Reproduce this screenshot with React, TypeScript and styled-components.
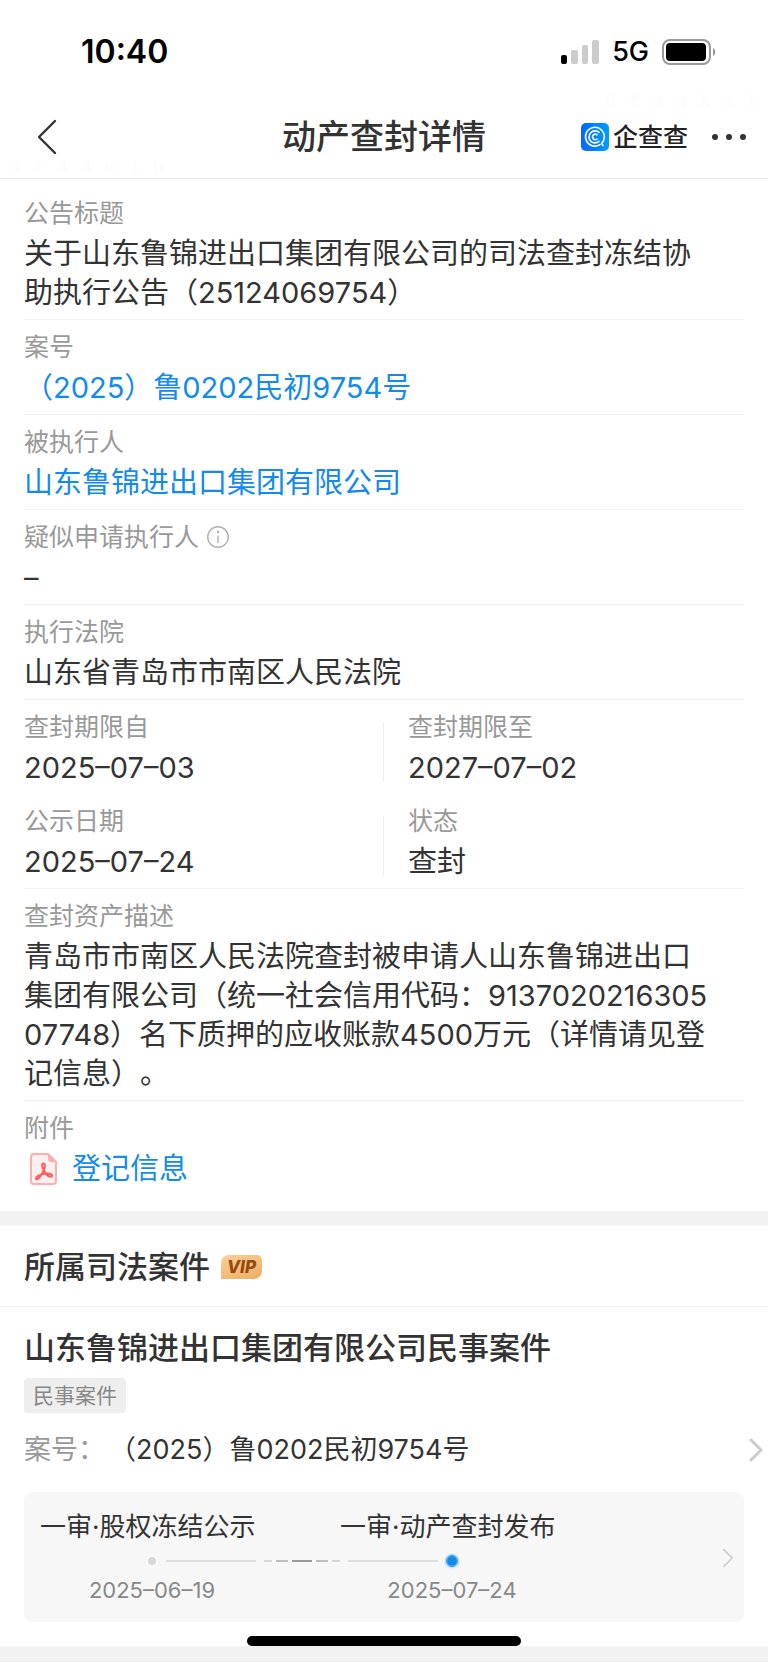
import React from "react";
import styled, { createGlobalStyle, css } from "styled-components";

const GlobalStyle = createGlobalStyle`
  *, *::before, *::after { box-sizing: border-box; }
  body {
    margin: 0;
    background: #fff;
    color: #333;
    font-family: Inter, "Noto Sans CJK SC", sans-serif;
    font-size: 29px;
    text-spacing-trim: space-all;
  }
  h1, h2, h3, p, dl, dt, dd, ol { margin: 0; padding: 0; font-weight: 400; }
  button { border: 0; padding: 0; background: none; color: inherit; font: inherit; cursor: pointer; }
  a { color: inherit; text-decoration: none; }
  svg { display: block; flex: none; }
`;

const Page = styled.div`
  position: relative;
  background: #fff;
`;

const StatusBar = styled.header`
  display: flex;
  align-items: center;
  justify-content: space-between;
  height: 102px;
  padding: 1px 52px 0 81px;
  color: #000;
`;

const Clock = styled.time`
  font-size: 32px;
  font-weight: 600;
  line-height: 40px;
`;

const StatusIcons = styled.div`
  display: flex;
  align-items: center;
  gap: 13px;
  font-size: 27px;
  font-weight: 500;
  line-height: 32px;
`;

const NavBar = styled.nav`
  display: grid;
  grid-template-columns: 1fr auto 1fr;
  align-items: center;
  height: 77px;
  padding: 0 22px 7px;
  border-bottom: 1px solid #ededed;
`;

const NavTitle = styled.h1`
  font-size: 34px;
  font-weight: 500;
  line-height: 48px;
`;

const NavSide = styled.div`
  display: flex;
  align-items: center;
  justify-content: flex-end;
  gap: 24px;
`;

const BackButton = styled.button`
  justify-self: start;
  margin-left: 14px;
`;

const Brand = styled.a`
  display: flex;
  align-items: center;
  gap: 4px;
  color: #222;
  font-size: 25px;
  font-weight: 500;
  line-height: 32px;
`;

const Watermark = styled.span<{ $corner: "left" | "right" }>`
  position: absolute;
  ${(p) => (p.$corner === "left" ? css`left: 8px; top: 157px;` : css`right: 8px; top: 91px;`)}
  color: #fcfcfc;
  font-family: "Liberation Mono", monospace;
  font-size: 20px;
  line-height: 24px;
  white-space: nowrap;
  pointer-events: none;
`;

const Details = styled.dl`
  padding: 7px 24px 16px;
  border-bottom: 15px solid #f2f2f2;
`;

const Field = styled.div<{ $last?: boolean }>`
  padding: 10px 30px 7px 0;
  border-bottom: ${(p) => (p.$last ? "0" : "1px solid #f0f0f0")};
`;

const FieldPair = styled.div<{ $last?: boolean }>`
  display: grid;
  grid-template-columns: 1fr 1fr;
  padding: 10px 0 7px;
  border-bottom: ${(p) => (p.$last ? "1px solid #f0f0f0" : "0")};
`;

const PairCell = styled.div<{ $divided?: boolean }>`
  position: relative;
  padding-left: ${(p) => (p.$divided ? "24px" : "0")};
  &::before {
    content: "";
    display: ${(p) => (p.$divided ? "block" : "none")};
    position: absolute;
    left: -1px;
    top: 12px;
    bottom: 5px;
    width: 1px;
    background: #eee;
  }
`;

const Label = styled.dt`
  display: flex;
  align-items: center;
  gap: 7px;
  margin-bottom: 4px;
  color: #999;
  font-size: 25px;
  line-height: 34px;
`;

const Value = styled.dd`
  font-size: 29px;
  line-height: 39px;
  word-break: break-all;
`;

const BlueLink = styled.a`
  color: #128bed;
`;

const FileLink = styled(BlueLink)`
  display: flex;
  align-items: center;
  gap: 15px;
  padding-left: 6px;
`;

const SectionHead = styled.div`
  display: flex;
  align-items: center;
  gap: 11px;
  padding: 17px 24px 15px;
  border-bottom: 1px solid #eee;
`;

const Heading = styled.h2`
  font-size: 31px;
  font-weight: 500;
  line-height: 48px;
`;

const VipBadge = styled.span`
  padding: 0 6px;
  border-radius: 8px 5px 8px 1px;
  background: linear-gradient(160deg, #fbcf98, #efac64);
  color: #964a0c;
  font-size: 17px;
  font-style: italic;
  font-weight: 800;
  line-height: 24px;
`;

const CaseCard = styled.section`
  padding: 17px 24px 24px;
  border-bottom: 16px solid #f2f2f2;
`;

const TagRow = styled.div`
  display: flex;
  margin-top: 6px;
`;

const Tag = styled.span`
  padding: 0 9px;
  border-radius: 4px;
  background: #eee;
  color: #888;
  font-size: 21px;
  line-height: 35px;
`;

const CaseLink = styled.a`
  display: flex;
  align-items: center;
  gap: 4px;
  margin: 17px -19px 0 0;
  font-size: 27px;
  line-height: 40px;
`;

const CaseLabel = styled.span`
  color: #999;
`;

const CaseNumber = styled.span`
  flex: 1;
`;

const Timeline = styled.a`
  display: flex;
  align-items: center;
  justify-content: space-between;
  margin-top: 22px;
  padding: 19px 10px 18px 16px;
  border-radius: 8px;
  background: #f7f7f7;
`;

const Steps = styled.div`
  display: grid;
  grid-template-columns: 300px 300px;
`;

const StepName = styled.span`
  width: 224px;
  font-size: 26px;
  line-height: 32px;
  white-space: nowrap;
`;

const StepDate = styled.time`
  width: 224px;
  color: #888;
  font-size: 22px;
  line-height: 28px;
  text-align: center;
`;

const Track = styled.div`
  grid-column: 1 / -1;
  display: flex;
  align-items: center;
  gap: 8px;
  margin: 12px 0 9px 106px;
`;

const Dot = styled.i<{ $active?: boolean }>`
  flex: none;
  width: 12px;
  height: 12px;
  border: ${(p) => (p.$active ? "1px solid #2f9aef" : "2px solid #f7f7f7")};
  border-radius: 50%;
  background: ${(p) => (p.$active ? "#128bed" : "#d6d6d6")};
  background-clip: padding-box;
  box-shadow: ${(p) => (p.$active ? "0 0 2px 1px #a9d5f8" : "none")};
`;

const Rule = styled.i`
  width: 90px;
  height: 2px;
  background: #dedede;
`;

const HomeIndicator = styled.div`
  position: absolute;
  left: 50%;
  bottom: 16px;
  width: 274px;
  height: 10px;
  margin-left: -137px;
  border-radius: 5px;
  background: #000;
`;

const SignalIcon = () => (
  <svg width="38" height="24" viewBox="0 0 38 24">
    <rect x="0" y="15" width="6" height="9" rx="2" fill="#000" />
    <rect x="10" y="10" width="7" height="14" rx="2" fill="#ccc" />
    <rect x="21" y="5" width="6" height="19" rx="2" fill="#ccc" />
    <rect x="31" y="0" width="7" height="24" rx="2" fill="#ccc" />
  </svg>
);

const BatteryIcon = () => (
  <svg width="54" height="26" viewBox="0 0 54 26">
    <rect x="1" y="1" width="47" height="24" rx="7" fill="none" stroke="#999" strokeWidth="2" />
    <rect x="4" y="4" width="40" height="18" rx="4" fill="#000" />
    <path d="M51 9c3 1.500 3 6.500 0 8z" fill="#999" />
  </svg>
);

const BackIcon = () => (
  <svg width="24" height="36" viewBox="0 0 24 36" fill="none" stroke="#333" strokeWidth="2.400" strokeLinecap="round" strokeLinejoin="round">
    <path d="M19 2 3 18l16 16" />
  </svg>
);

const BrandIcon = () => (
  <svg width="28" height="28" viewBox="0 0 28 28" fill="none" stroke="#fff" strokeLinecap="round">
    <defs>
      <linearGradient id="brand" x1="0" y1="0" x2="1" y2="0">
        <stop offset="0" stopColor="#0468ff" />
        <stop offset="1" stopColor="#009dff" />
      </linearGradient>
    </defs>
    <rect width="28" height="28" rx="5" fill="url(#brand)" stroke="none" />
    <path d="M19 21.600A9.400 9.400 0 1 1 23.300 13.800c0 2.500-1 4.800-2.600 6.500L22 22.500" strokeWidth="1.600" />
    <path d="M18 9.400A6 6 0 1 0 18 18.400" strokeWidth="1.700" />
    <path d="M16 11.800A2.700 2.700 0 1 0 16 16" strokeWidth="1.600" />
  </svg>
);

const MoreIcon = () => (
  <svg width="34" height="8" viewBox="0 0 34 8" fill="#333">
    <circle cx="3" cy="4" r="3" />
    <circle cx="17" cy="4" r="3" />
    <circle cx="31" cy="4" r="3" />
  </svg>
);

const InfoIcon = () => (
  <svg width="24" height="24" viewBox="0 0 24 24" fill="none" stroke="#b0b0b0" strokeWidth="1.400">
    <circle cx="12" cy="12" r="10.300" />
    <path d="M12 10.500V18" />
    <circle cx="12" cy="7" r="1.200" fill="#b0b0b0" stroke="none" />
  </svg>
);

const PdfIcon = () => (
  <svg width="27" height="32" viewBox="0 0 27 32">
    <path d="M4 1h14l8 8v19a3 3 0 0 1-3 3H4a3 3 0 0 1-3-3V4a3 3 0 0 1 3-3z" fill="#fff0f0" stroke="#ffadad" strokeWidth="2" />
    <path d="M18 1v5a3 3 0 0 0 3 3h5z" fill="#ffadad" />
    <path d="M13.500 10.500c-2.600 0-1 4 .2 6.500 1.600 3.600 4.500 6.600 7 6.800 2 0 1.600-2.400-.5-2.900-3.800-.8-8.700.3-12.200 2.100-2.900 1.500-2.400 3.700-.7 3.200 2.900-1 8.300-11.200 7.500-14.500-.2-.8-.7-1.200-1.300-1.200z" fill="none" stroke="#ff5c5c" strokeWidth="2" />
  </svg>
);

const Chevron = ({ width, height, weight }: { width: number; height: number; weight: number }) => (
  <svg width={width} height={height} viewBox="0 0 14 24" fill="none" stroke="#ccc" strokeWidth={weight} strokeLinecap="round" strokeLinejoin="round">
    <path d="M2 2l10 10L2 22" />
  </svg>
);

const DashIcon = () => (
  <svg width="76" height="2" viewBox="0 0 76 2">
    <rect width="8" height="2" fill="#d6d6d6" />
    <rect x="12" width="12" height="2" fill="#bdbdbd" />
    <rect x="28" width="20" height="2" fill="#999" />
    <rect x="52" width="12" height="2" fill="#bdbdbd" />
    <rect x="68" width="8" height="2" fill="#d6d6d6" />
  </svg>
);

export default function App() {
  return (
    <Page>
      <GlobalStyle />
      <StatusBar>
        <Clock>10:40</Clock>
        <StatusIcons>
          <SignalIcon />
          <span>5G</span>
          <BatteryIcon />
        </StatusIcons>
      </StatusBar>
      <NavBar>
        <BackButton aria-label="返回"><BackIcon /></BackButton>
        <NavTitle>动产查封详情</NavTitle>
        <NavSide>
          <Brand href="#"><BrandIcon />企查查</Brand>
          <button aria-label="更多"><MoreIcon /></button>
        </NavSide>
      </NavBar>
      <Watermark $corner="left" aria-hidden="true">8 f 4 4 k 1 h</Watermark>
      <Watermark $corner="right" aria-hidden="true">8 f 4 4 k 1 h</Watermark>

      <Details>
        <Field>
          <Label>公告标题</Label>
          <Value>关于山东鲁锦进出口集团有限公司的司法查封冻结协助执行公告（25124069754）</Value>
        </Field>
        <Field>
          <Label>案号</Label>
          <Value><BlueLink href="#">（2025）鲁0202民初9754号</BlueLink></Value>
        </Field>
        <Field>
          <Label>被执行人</Label>
          <Value><BlueLink href="#">山东鲁锦进出口集团有限公司</BlueLink></Value>
        </Field>
        <Field>
          <Label>疑似申请执行人<InfoIcon /></Label>
          <Value>–</Value>
        </Field>
        <Field>
          <Label>执行法院</Label>
          <Value>山东省青岛市市南区人民法院</Value>
        </Field>
        <FieldPair>
          <PairCell>
            <Label>查封期限自</Label>
            <Value>2025–07–03</Value>
          </PairCell>
          <PairCell $divided>
            <Label>查封期限至</Label>
            <Value>2027–07–02</Value>
          </PairCell>
        </FieldPair>
        <FieldPair $last>
          <PairCell>
            <Label>公示日期</Label>
            <Value>2025–07–24</Value>
          </PairCell>
          <PairCell $divided>
            <Label>状态</Label>
            <Value>查封</Value>
          </PairCell>
        </FieldPair>
        <Field>
          <Label>查封资产描述</Label>
          <Value>青岛市市南区人民法院查封被申请人山东鲁锦进出口集团有限公司（统一社会信用代码：913702021630507748）名下质押的应收账款4500万元（详情请见登记信息）。</Value>
        </Field>
        <Field $last>
          <Label>附件</Label>
          <Value><FileLink href="#"><PdfIcon />登记信息</FileLink></Value>
        </Field>
      </Details>

      <SectionHead>
        <Heading>所属司法案件</Heading>
        <VipBadge>VIP</VipBadge>
      </SectionHead>
      <CaseCard>
        <Heading as="h3">山东鲁锦进出口集团有限公司民事案件</Heading>
        <TagRow><Tag>民事案件</Tag></TagRow>
        <CaseLink href="#">
          <CaseLabel>案号：</CaseLabel>
          <CaseNumber>（2025）鲁0202民初9754号</CaseNumber>
          <Chevron width={14} height={24} weight={3} />
        </CaseLink>
        <Timeline href="#">
          <Steps>
            <StepName>一审·股权冻结公示</StepName>
            <StepName>一审·动产查封发布</StepName>
            <Track>
              <Dot />
              <Rule />
              <DashIcon />
              <Rule />
              <Dot $active />
            </Track>
            <StepDate>2025–06–19</StepDate>
            <StepDate>2025–07–24</StepDate>
          </Steps>
          <Chevron width={12} height={20} weight={2} />
        </Timeline>
      </CaseCard>
      <HomeIndicator />
    </Page>
  );
}
